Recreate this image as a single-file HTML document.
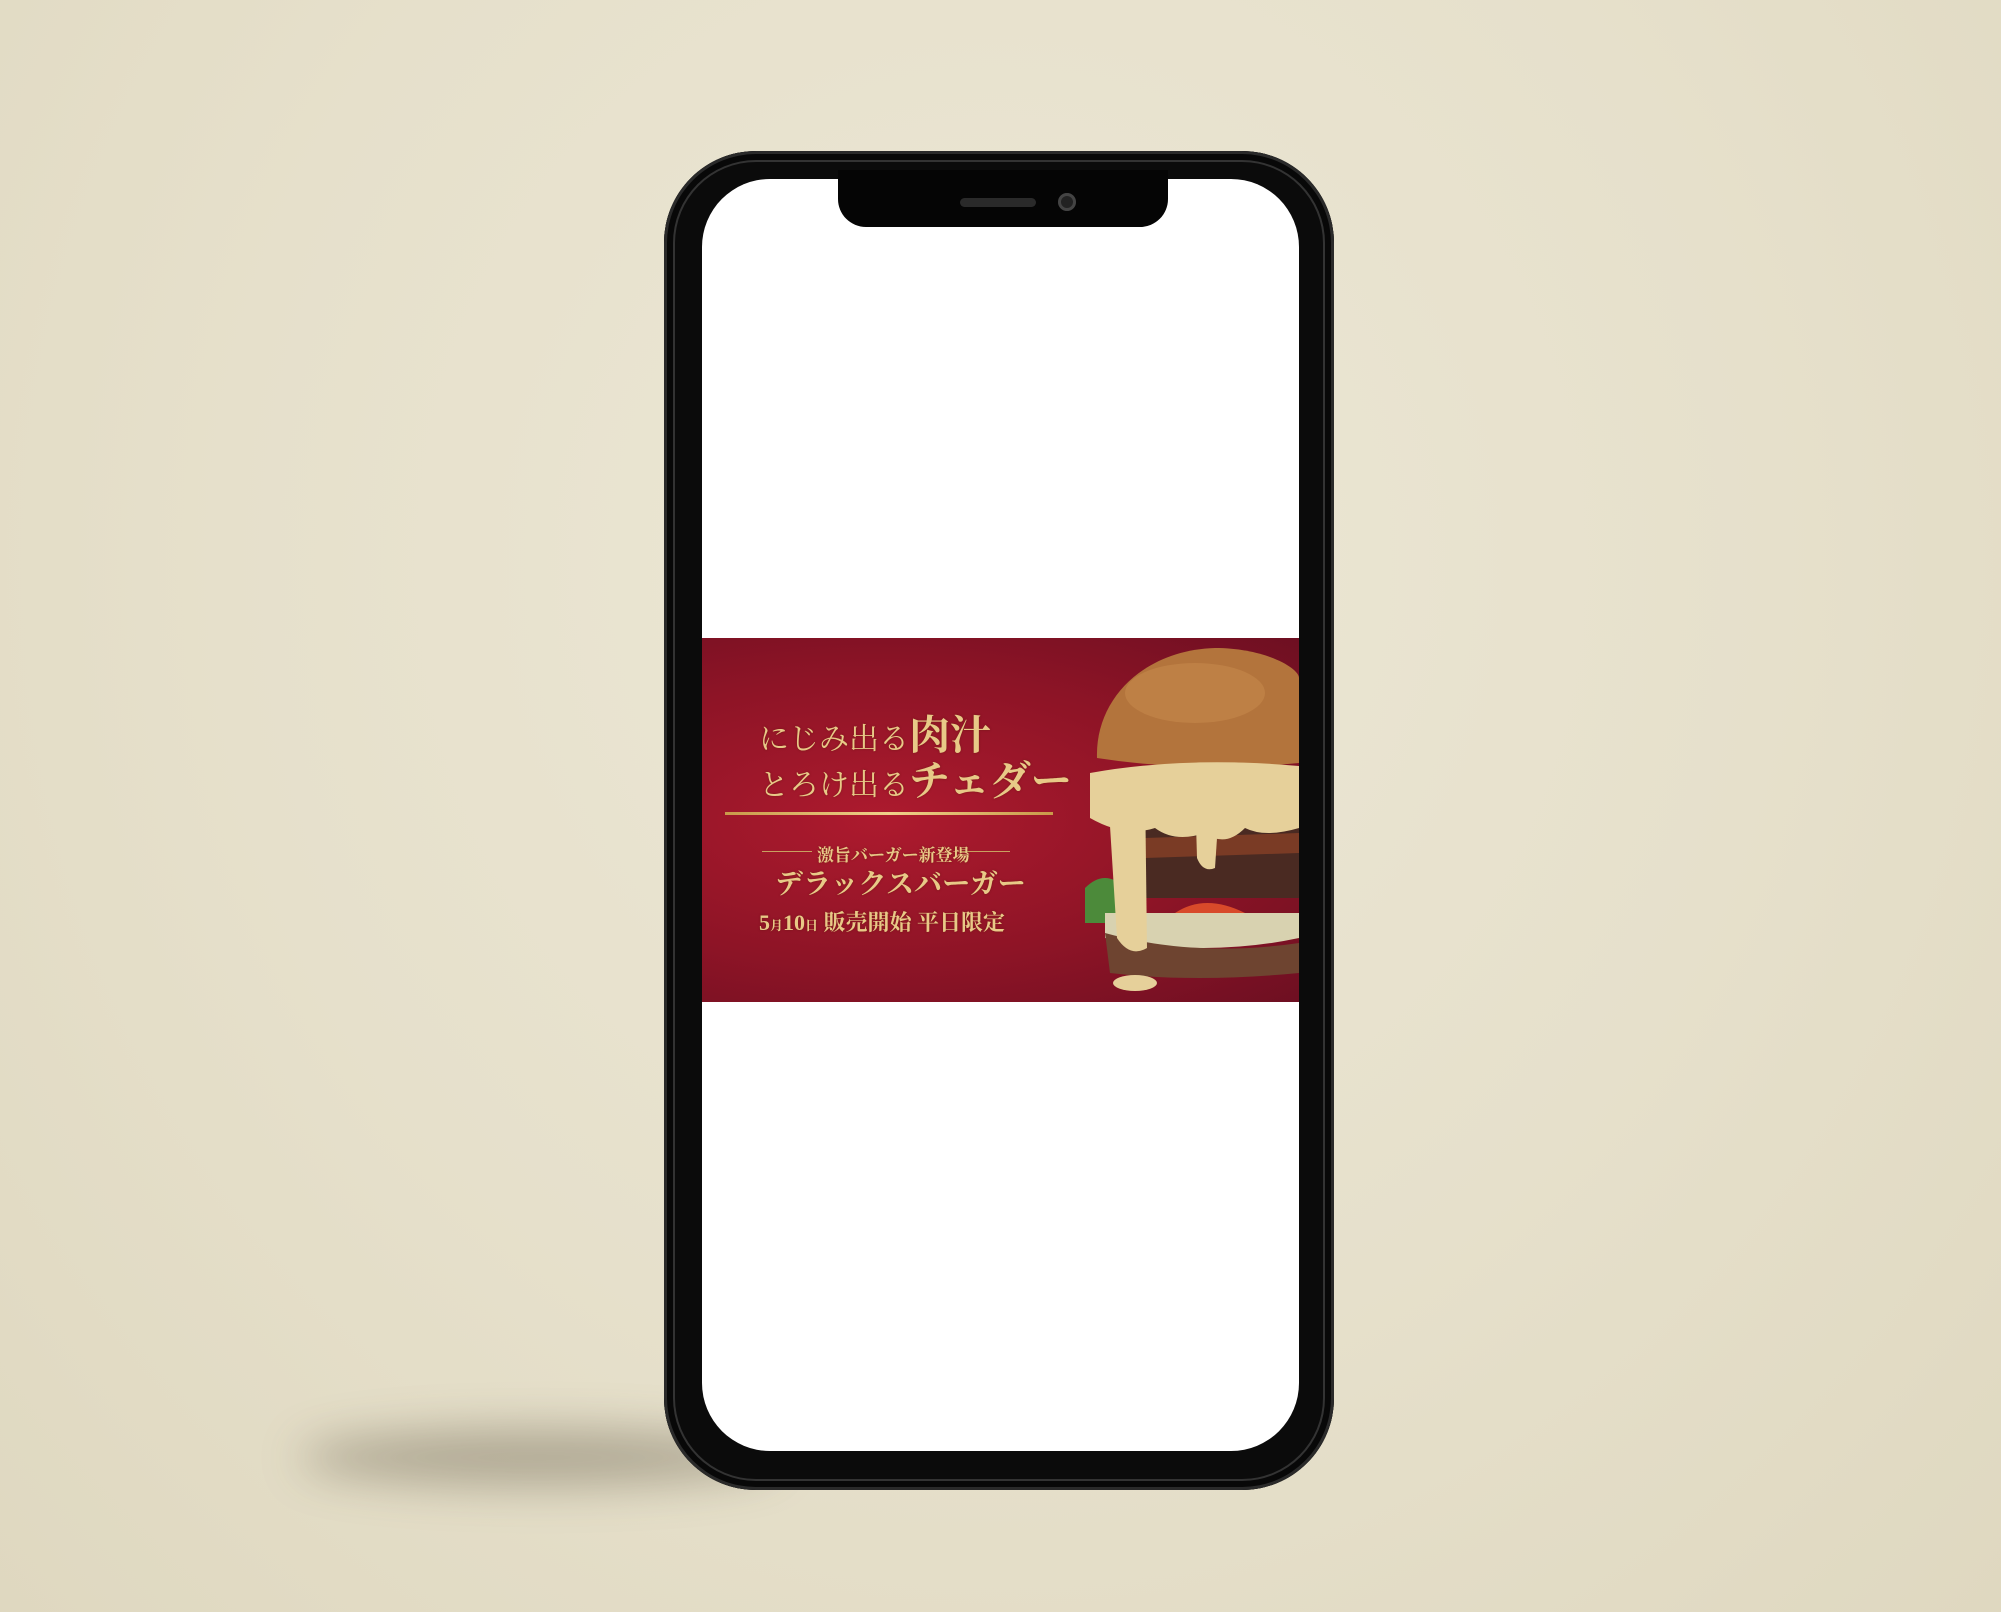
<!DOCTYPE html>
<html><head><meta charset="utf-8"><style>
html,body{margin:0;padding:0}
body{width:2001px;height:1612px;position:relative;overflow:hidden;
background:radial-gradient(ellipse at 50% 35%,#ece7d5 0%,#e6e0cb 55%,#dfd8c0 100%);
font-family:"Liberation Serif","Noto Serif CJK SC","Noto Sans CJK JP",serif}
.shadow{position:absolute;left:300px;top:1430px;width:480px;height:55px;border-radius:50%;
background:rgba(60,50,30,.32);filter:blur(22px)}
.phone{position:absolute;left:664px;top:151px;width:670px;height:1339px;border-radius:92px;
background:#0b0b0b;box-shadow:inset 0 0 0 3px #2a2a2a,inset 0 0 0 9px #080808,inset 0 0 0 11px #333}
.screen{position:absolute;left:702px;top:179px;width:597px;height:1272px;border-radius:68px;background:#fff;overflow:hidden}
.notch{position:absolute;left:838px;top:170px;width:330px;height:57px;background:#050505;border-radius:0 0 28px 28px}
.spk{position:absolute;left:960px;top:198px;width:76px;height:9px;border-radius:5px;background:#2a2a2a}
.cam{position:absolute;left:1058px;top:193px;width:18px;height:18px;border-radius:50%;background:#222;box-shadow:inset 0 0 0 3px #444}
.banner{position:absolute;left:0;top:459px;width:597px;height:364px;
background:radial-gradient(ellipse at 30% 50%,#ad1a2e 0%,#8e1426 55%,#6e0f22 100%)}
.t{position:absolute;color:#e8c987;white-space:nowrap;text-shadow:0 0 2px rgba(80,30,0,.5)}
</style></head><body>
<div class="shadow"></div>
<div class="phone"></div>
<div class="screen">
 <div class="banner">
  <div class="t" style="left:57px;top:64px;font-size:30px">にじみ出る<span style="font-size:41px;font-weight:bold">肉汁</span></div>
  <div class="t" style="left:57px;top:110px;font-size:30px">とろけ出る<span style="font-size:41px;font-weight:bold">チェダー</span></div>
  <div style="position:absolute;left:23px;top:174px;width:328px;height:3px;background:linear-gradient(90deg,#c99a4a,#f0d08a,#c99a4a)"></div>
  <div style="position:absolute;left:60px;top:213px;width:50px;height:1px;background:#c9a060"></div>
  <div style="position:absolute;left:258px;top:213px;width:50px;height:1px;background:#c9a060"></div>
  <div class="t" style="left:115px;top:203px;font-size:17px;font-weight:bold">激旨バーガー新登場</div>
  <div class="t" style="left:73px;top:224px;font-size:28px;font-weight:bold">デラックスバーガー</div>
  <div class="t" style="left:57px;top:268px;font-size:22px;font-weight:bold">5<span style="font-size:13px">月</span>10<span style="font-size:13px">日</span> 販売開始 平日限定</div>
  <svg style="position:absolute;left:383px;top:0" width="214" height="364" viewBox="0 0 214 364">
   <path d="M12 120 C10 60 60 12 130 10 C180 10 214 30 214 40 L214 125 Q110 135 12 120Z" fill="#b3743c"/>
   <ellipse cx="110" cy="55" rx="70" ry="30" fill="#c98c4e" opacity=".5"/>
   <path d="M30 185 L214 185 L214 260 L30 260Z" fill="#4a2a22"/>
   <path d="M60 200 L214 195 L214 215 L60 220Z" fill="#7a3b25"/>
   <path d="M0 250 Q20 230 40 250 L40 285 L0 285Z" fill="#4c8a3a"/>
   <path d="M90 275 Q120 255 160 275 L150 290 L95 290Z" fill="#d84a2a"/>
   <path d="M20 275 L214 275 L214 300 Q120 320 20 300Z" fill="#d8d2b0"/>
   <path d="M20 295 Q110 320 214 305 L214 335 Q110 345 25 335Z" fill="#6e4430"/>
   <path d="M5 135 Q100 118 214 128 L214 190 Q180 200 160 190 Q140 210 120 195 Q90 205 70 190 Q40 200 5 180Z" fill="#e6d09a"/>
   <path d="M22 140 Q40 135 60 145 L62 310 Q45 320 32 300Z" fill="#e6d09a"/>
   <path d="M110 150 Q125 145 135 155 L130 230 Q118 235 112 220Z" fill="#e6d09a"/>
   <ellipse cx="50" cy="345" rx="22" ry="8" fill="#e6d09a"/>
  </svg>
 </div>
</div>
<div class="notch"></div>
<div class="spk"></div>
<div class="cam"></div>
</body></html>
